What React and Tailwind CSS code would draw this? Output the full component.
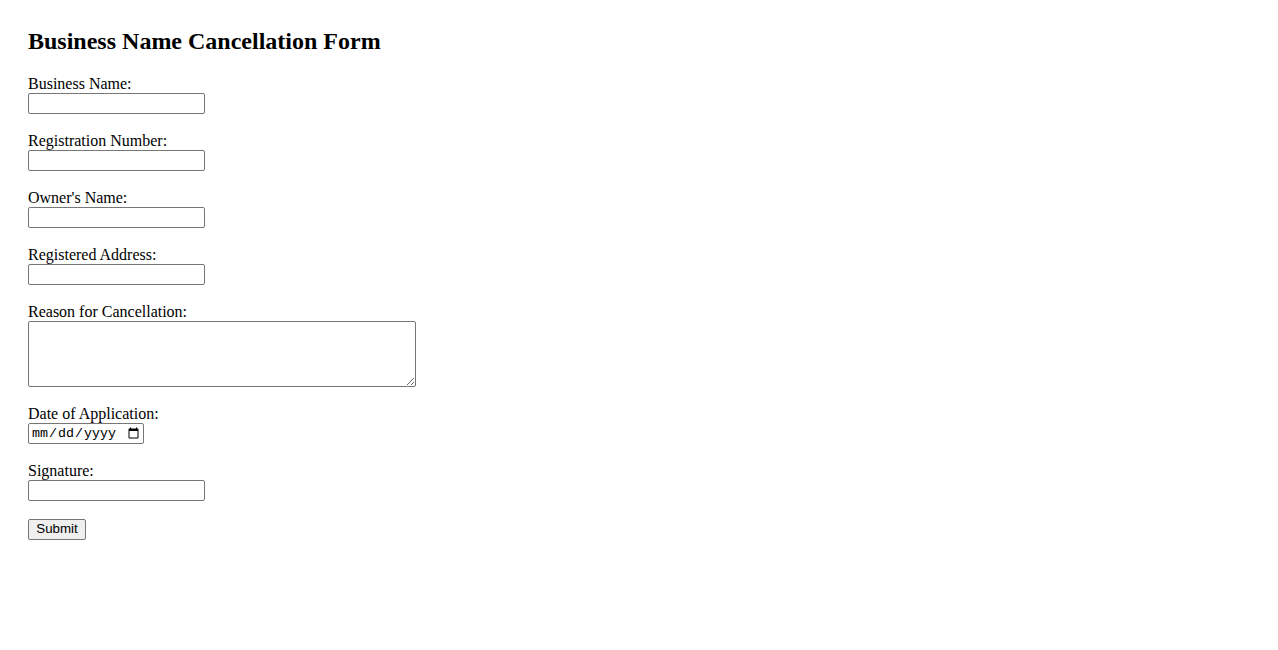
import React from 'react';

const fields = [
  { id: 'businessName', label: 'Business Name:' },
  { id: 'registrationNumber', label: 'Registration Number:' },
  { id: 'ownerName', label: "Owner's Name:" },
  { id: 'registeredAddress', label: 'Registered Address:' },
];

const inputClass =
  'block w-[177px] h-[21px] border border-[#767676] rounded-[2px] bg-white px-[2px] text-[13.33px] font-["Liberation_Sans",sans-serif] outline-none';

export default function App() {
  return (
    <div className="min-h-[650px] bg-white px-[28px] pt-[28px] text-black font-['Liberation_Serif',serif] text-[16px]">
      <h2 className="text-[24px] leading-[26.6px] font-bold mb-[20px]">Business Name Cancellation Form</h2>
      <form onSubmit={(e) => e.preventDefault()}>
        {fields.map((f) => (
          <div key={f.id} className="mb-[17.6px]">
            <label htmlFor={f.id} className="block leading-[18.4px]">{f.label}</label>
            <input id={f.id} type="text" className={inputClass} />
          </div>
        ))}

        <div className="mb-[17.6px]">
          <label htmlFor="reason" className="block leading-[18.4px]">Reason for Cancellation:</label>
          <textarea
            id="reason"
            className="block w-[388px] h-[66px] border border-[#767676] rounded-[2px] bg-white p-[2px] text-[13.33px] font-['Liberation_Mono',monospace] outline-none resize"
          />
        </div>

        <div className="mb-[17.6px]">
          <label htmlFor="date" className="block leading-[18.4px]">Date of Application:</label>
          <input
            id="date"
            type="date"
            className="block w-[116px] h-[21px] border border-[#767676] rounded-[2px] bg-white pl-[2px] pr-[1px] text-[13.33px] font-['Liberation_Mono',monospace] outline-none"
          />
        </div>

        <div className="mb-[17.6px]">
          <label htmlFor="signature" className="block leading-[18.4px]">Signature:</label>
          <input id="signature" type="text" className={inputClass} />
        </div>

        <button
          type="submit"
          className="block w-[58px] h-[21px] border border-[#767676] rounded-[2px] bg-[#efefef] text-[13.33px] leading-none font-['Liberation_Sans',sans-serif] text-black"
        >
          Submit
        </button>
      </form>
    </div>
  );
}
